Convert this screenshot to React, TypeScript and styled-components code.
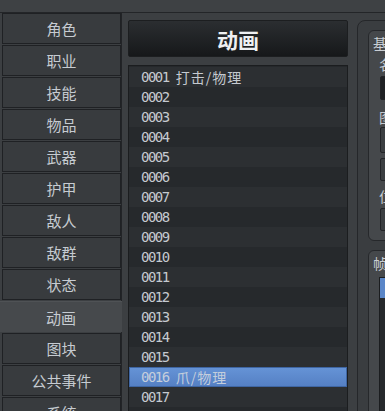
import React from 'react';
import styled, { createGlobalStyle } from 'styled-components';

const CJK = `"Noto Sans CJK SC", "Noto Sans", sans-serif`;

const GlobalStyle = createGlobalStyle`
  html, body {
    margin: 0;
    padding: 0;
    background: #3c3f42;
    overflow: hidden;
  }
`;

const Window = styled.div`
  width: 385px;
  height: 411px;
  overflow: hidden;
  display: flex;
  flex-direction: column;
  background: #3c3f42;
  font-family: ${CJK};
`;

const TopBar = styled.div`
  height: 12px;
  flex: none;
  background: #3e4144;
  border-bottom: 1px solid #232528;
`;

const Body = styled.div`
  flex: 1;
  min-height: 0;
  display: flex;
`;

const SideBar = styled.div`
  width: 122px;
  flex: none;
  box-sizing: border-box;
  padding-left: 2px;
  border-right: 1px solid #222427;
  display: flex;
  flex-direction: column;
  gap: 1px;
`;

const NavButton = styled.div<{ $active?: boolean }>`
  height: 31px;
  flex: none;
  box-sizing: border-box;
  display: flex;
  align-items: center;
  justify-content: center;
  font-size: 15px;
  color: #c6cbd1;
  background: ${(p) => (p.$active ? '#46494c' : '#383b3e')};
  border: ${(p) => (p.$active ? 'none' : '1px solid #1f2124')};
  border-top: ${(p) => (p.$active ? '1px solid #4f5255' : '1px solid #1f2124')};
  margin-left: ${(p) => (p.$active ? '-2px' : '0')};
  margin-right: ${(p) => (p.$active ? '-1px' : '0')};
`;

const Center = styled.div`
  width: 235px;
  flex: none;
  box-sizing: border-box;
  padding: 7px 9px 0 6px;
  display: flex;
  flex-direction: column;
`;

const Header = styled.div`
  height: 37px;
  flex: none;
  box-sizing: border-box;
  border-radius: 2px;
  border: 1px solid #1c1e20;
  background: linear-gradient(#2b2e31, #16181a);
  display: flex;
  align-items: center;
  justify-content: center;
  color: #eef0f2;
  font-size: 21px;
  font-weight: 700;
  margin-bottom: 8px;
`;

const List = styled.div`
  flex: 1;
  border: 1px solid #1b1d1f;
  background: #25282b;
  padding-top: 1px;
`;

const Row = styled.div<{ $odd: boolean; $selected?: boolean }>`
  height: 20px;
  box-sizing: border-box;
  display: flex;
  align-items: center;
  white-space: pre;
  color: ${(p) => (p.$selected ? '#c4cedc' : '#c5cad0')};
  background: ${(p) =>
    p.$selected ? 'linear-gradient(#6593d6, #5580c4)' : p.$odd ? '#2c2f32' : '#26292c'};
  border: ${(p) => (p.$selected ? '1px solid #3f66a3' : 'none')};
  padding-left: ${(p) => (p.$selected ? '11px' : '12px')};
`;

const Num = styled.span`
  font-family: "DejaVu Sans Mono", "Liberation Mono", monospace;
  font-size: 14px;
  letter-spacing: -1.5px;
`;

const Name = styled.span`
  font-family: ${CJK};
  font-size: 14px;
  letter-spacing: 1px;
`;

const RightPanel = styled.div`
  width: 300px;
  flex: none;
  margin-top: 7px;
  height: 420px;
  box-sizing: border-box;
  border: 1px solid #25272a;
  border-radius: 8px;
  background: #3a3d40;
  padding: 9px 0 0 10px;
  display: flex;
  flex-direction: column;
  gap: 9px;
`;

const Group = styled.div<{ $h: number }>`
  height: ${(p) => p.$h}px;
  flex: none;
  box-sizing: border-box;
  border: 1px solid #26282b;
  border-radius: 6px;
  background: #45484b;
  padding: 5px 0 0 4px;
  display: flex;
  flex-direction: column;
`;

const GroupTitle = styled.div`
  font-size: 14px;
  line-height: 15px;
  color: #c9ced4;
`;

const Label = styled.div<{ $top: number }>`
  margin: ${(p) => p.$top}px 0 0 6px;
  font-size: 14px;
  line-height: 15px;
  color: #c3c9d0;
`;

const Field = styled.div<{ $top: number; $h: number; $dark?: boolean }>`
  margin: ${(p) => p.$top}px 0 0 7px;
  height: ${(p) => p.$h}px;
  box-sizing: border-box;
  border: 1px solid #222427;
  border-radius: 2px;
  background: ${(p) => (p.$dark ? '#1f2124' : '#3b3e41')};
`;

const FrameList = styled.div`
  margin: 6px 0 0 6px;
  flex: 1;
  border: 1px solid #1b1d1f;
  background: #26292c;
`;

const FrameRow = styled.div<{ $selected?: boolean }>`
  height: 20px;
  background: ${(p) => (p.$selected ? '#5a86c8' : 'transparent')};
`;

const NAV = ['角色', '职业', '技能', '物品', '武器', '护甲', '敌人', '敌群', '状态', '动画', '图块', '公共事件', '系统'];

const NAMES: Record<number, string> = { 1: '打击/物理', 16: '爪/物理' };

export default function App() {
  const rows = Array.from({ length: 20 }, (_, i) => i + 1);
  return (
    <>
      <GlobalStyle />
      <Window>
        <TopBar />
        <Body>
          <SideBar>
            {NAV.map((n) => (
              <NavButton key={n} $active={n === '动画'}>
                {n}
              </NavButton>
            ))}
          </SideBar>
          <Center>
            <Header>动画</Header>
            <List>
              {rows.map((r) => (
                <Row key={r} $odd={r % 2 === 1} $selected={r === 16}>
                  <Num>{String(r).padStart(4, '0')} </Num>
                  {NAMES[r] ? <Name>{NAMES[r]}</Name> : null}
                </Row>
              ))}
            </List>
          </Center>
          <RightPanel>
            <Group $h={211}>
              <GroupTitle>基本设置</GroupTitle>
              <Label $top={6}>名称</Label>
              <Field $top={4} $h={24} $dark />
              <Label $top={10}>图像</Label>
              <Field $top={2} $h={26} />
              <Field $top={5} $h={23} />
              <Label $top={8}>位置</Label>
              <Field $top={4} $h={23} />
            </Group>
            <Group $h={200}>
              <GroupTitle>帧</GroupTitle>
              <FrameList>
                <FrameRow $selected />
                <FrameRow />
              </FrameList>
            </Group>
          </RightPanel>
        </Body>
      </Window>
    </>
  );
}
